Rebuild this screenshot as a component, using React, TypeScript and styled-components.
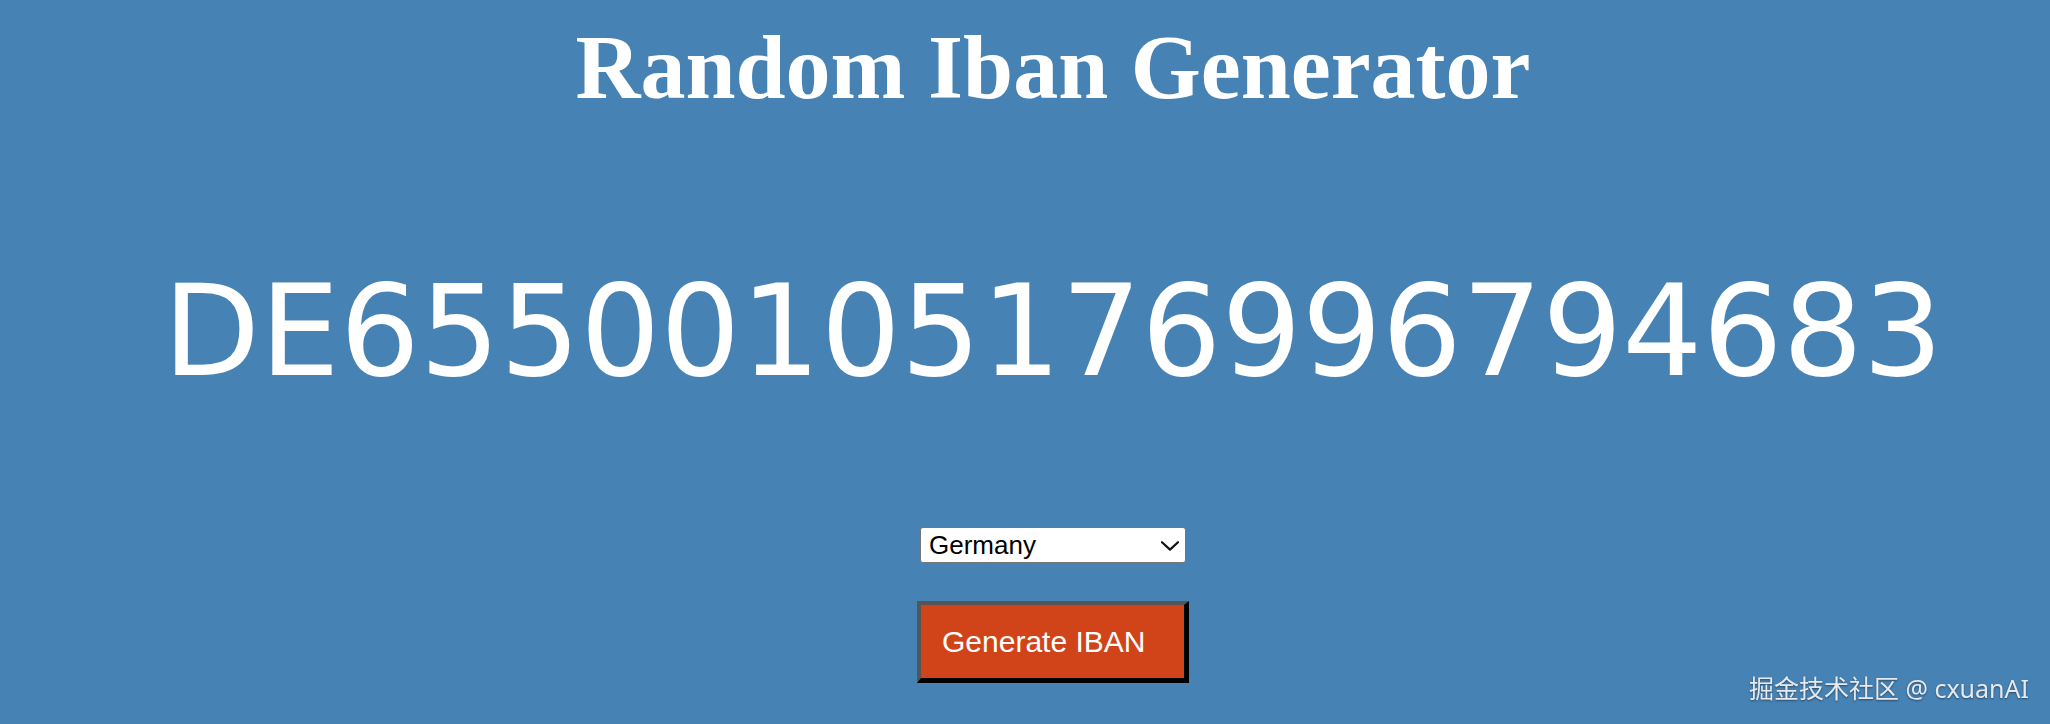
import styled, { createGlobalStyle } from 'styled-components'

const countries = ['Germany', 'France', 'Netherlands', 'Spain', 'Italy']

const GlobalStyle = createGlobalStyle`
  html, body {
    margin: 0;
    padding: 0;
    background: #4682b4;
  }
`

export default function App() {
  return (
    <>
      <GlobalStyle />
      <Page>
        <Title>Random Iban Generator</Title>
        <Iban>DE65500105176996794683</Iban>
        <SelectWrap>
          <CountrySelect defaultValue='Germany'>
            {countries.map(c => (
              <option key={c}>{c}</option>
            ))}
          </CountrySelect>
          <Chevron width='18' height='10' viewBox='0 0 18 10'>
            <path d='M1 1.2 L9 8.6 L17 1.2' fill='none' stroke='#111' strokeWidth='2.2' strokeLinecap='round' strokeLinejoin='round' />
          </Chevron>
        </SelectWrap>
        <GenerateButton>Generate IBAN</GenerateButton>
      </Page>
      <Watermark>掘金技术社区 @ cxuanAI</Watermark>
    </>
  )
}

const Page = styled.main`
  display: flex;
  flex-direction: column;
  align-items: center;
  height: 724px;
  box-sizing: border-box;
  padding-left: 56px;
  background: #4682b4;
  color: #fff;
  overflow: hidden;
`

const Title = styled.h1`
  margin: 18px 0 0;
  font-family: 'Liberation Serif', 'Times New Roman', serif;
  font-weight: 700;
  font-size: 90px;
  line-height: 100px;
`

const Iban = styled.div`
  margin-top: 139px;
  font-family: 'DejaVu Sans', Verdana, sans-serif;
  font-size: 126px;
  line-height: 150px;
`

const SelectWrap = styled.div`
  position: relative;
  margin-top: 120px;
  width: 266px;
  height: 36px;
`

const CountrySelect = styled.select`
  appearance: none;
  width: 100%;
  height: 100%;
  box-sizing: border-box;
  padding: 0 0 0 8px;
  border: 1px solid #767676;
  border-radius: 3px;
  background: #fff;
  color: #000;
  font-family: 'Liberation Sans', Arial, sans-serif;
  font-size: 26px;
  outline: none;
`

const Chevron = styled.svg`
  position: absolute;
  right: 7px;
  top: 14px;
  pointer-events: none;
`

const GenerateButton = styled.button`
  margin-top: 38px;
  width: 272px;
  height: 82px;
  box-sizing: border-box;
  padding: 0 0 0 21px;
  text-align: left;
  border-style: solid;
  border-width: 4px 5px 5px 4px;
  border-color: #555 #000 #000 #555;
  background: #d1441a;
  color: #fff;
  font-family: 'Liberation Sans', Arial, sans-serif;
  font-size: 30px;
  cursor: pointer;
`

const Watermark = styled.div`
  position: fixed;
  right: 21px;
  bottom: 20px;
  font-family: 'Noto Sans', 'Noto Sans CJK SC', sans-serif;
  font-size: 25px;
  line-height: 32px;
  color: #e6e9ee;
  text-shadow: 0 1px 2px rgba(0, 0, 0, 0.45);
`
